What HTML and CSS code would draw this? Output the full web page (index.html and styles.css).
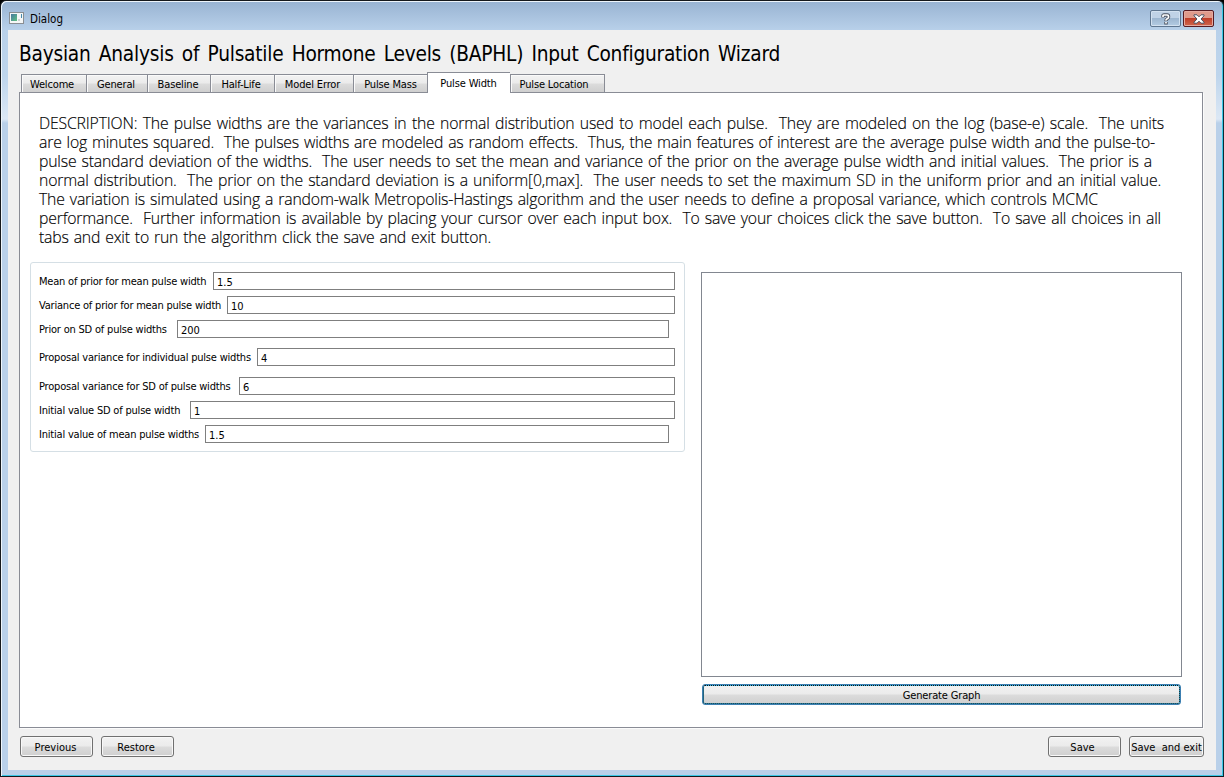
FILE: index.html
```html
<!DOCTYPE html>
<html lang="en">
<head>
<meta charset="utf-8">
<title>Dialog</title>
<link rel="stylesheet" href="styles.css">
</head>
<body>
<div class="window">
  <header class="titlebar">
    <svg class="app-icon" width="15" height="12" viewBox="0 0 15 12">
      <defs><linearGradient id="g" x2="1" y2="1"><stop offset="0" stop-color="#4778a0"/><stop offset="1" stop-color="#5fc182"/></linearGradient></defs>
      <rect x=".5" y=".5" width="14" height="11" fill="#f5f7f7" stroke="#8a8e92"/>
      <rect x="2" y="2" width="6" height="7" fill="url(#g)"/>
      <rect x="9" y="7" width="2" height="2" fill="#ccd3d3"/>
      <rect x="12" y="2" width="1" height="4" fill="#488cae"/>
    </svg>
    <span class="caption">Dialog</span>
    <button class="win-btn help" aria-label="Help"><svg width="10" height="12" viewBox="0 0 10 12"><path d="M2 4.6V3Q2 2 3.2 2h3Q7.5 2 7.5 3.2v1Q7.5 5.2 6.2 5.8T5 8.2M5 9v2.4" fill="none" stroke="#4b5260" stroke-width="3.4"/><path d="M2 4V3Q2 2 3.2 2h3Q7.5 2 7.5 3.2v1Q7.5 5.2 6.2 5.8T5 7.6M5 9v1.6" fill="none" stroke="#fff" stroke-width="1.7"/></svg></button>
    <button class="win-btn close" aria-label="Close"><svg width="12" height="10" viewBox="0 0 12 10"><path d="M1 .8h3l2 2 2-2h3v1L8 5l3 3.2v1H8l-2-2-2 2H1v-1L4 5 1 1.8z" fill="#fff" stroke="#4a5060"/></svg></button>
  </header>
  <main class="client">
    <h1><span class="fit">Baysian Analysis of Pulsatile Hormone Levels (BAPHL) Input Configuration Wizard</span></h1>
    <nav class="tabs">
      <span class="tab t1">Welcome</span><span class="tab t2">General</span><span class="tab t3">Baseline</span><span class="tab t4">Half-Life</span><span class="tab t5">Model Error</span><span class="tab t6">Pulse Mass</span><span class="tab t7 selected">Pulse Width</span><span class="tab t8">Pulse Location</span>
    </nav>
    <section class="panel">
      <div class="description">
        <div class="line l1">DESCRIPTION: The pulse widths are the variances in the normal distribution used to model each pulse.&nbsp; They are modeled on the log (base-e) scale.&nbsp; The units</div>
        <div class="line l2">are log minutes squared.&nbsp; The pulses widths are modeled as random effects.&nbsp; Thus, the main features of interest are the average pulse width and the pulse-to-</div>
        <div class="line l3">pulse standard deviation of the widths.&nbsp; The user needs to set the mean and variance of the prior on the average pulse width and initial values.&nbsp; The prior is a</div>
        <div class="line l4">normal distribution.&nbsp; The prior on the standard deviation is a uniform[0,max].&nbsp; The user needs to set the maximum SD in the uniform prior and an initial value.</div>
        <div class="line l5">The variation is simulated using a random-walk Metropolis-Hastings algorithm and the user needs to define a proposal variance, which controls MCMC</div>
        <div class="line l6">performance.&nbsp; Further information is available by placing your cursor over each input box.&nbsp; To save your choices click the save button.&nbsp; To save all choices in all</div>
        <div class="line l7">tabs and exit to run the algorithm click the save and exit button.</div>
      </div>
      <div class="content">
        <div class="group">
          <div class="row"><label class="w1">Mean of prior for mean pulse width</label><div class="field">1.5</div></div>
          <div class="row"><label class="w2">Variance of prior for mean pulse width</label><div class="field">10</div></div>
          <div class="row short"><label class="w3">Prior on SD of pulse widths</label><div class="field">200</div></div>
          <div class="row spaced-a"><label class="w4">Proposal variance for individual pulse widths</label><div class="field">4</div></div>
          <div class="row spaced-b"><label class="w5">Proposal variance for SD of pulse widths</label><div class="field">6</div></div>
          <div class="row"><label class="w6">Initial value SD of pulse width</label><div class="field">1</div></div>
          <div class="row short"><label class="w7">Initial value of mean pulse widths</label><div class="field">1.5</div></div>
        </div>
        <div class="graph-col">
          <div class="graph"></div>
          <button class="generate">Generate Graph</button>
        </div>
      </div>
    </section>
    <footer class="actions">
      <button class="btn">Previous</button>
      <button class="btn restore">Restore</button>
      <button class="btn save">Save</button>
      <button class="btn exit">Save&nbsp; and exit</button>
    </footer>
  </main>
</div>
</body>
</html>
```
FILE: styles.css
```css
* { box-sizing: border-box; }
body { margin: 0; background: #000; font: 11px/14px "DejaVu Sans Condensed", "DejaVu Sans", sans-serif; font-stretch: condensed; color: #000; overflow: hidden; }
button { font: inherit; color: inherit; padding: 0; }
.window { width: 1224px; height: 777px; border: 1px solid #15181c; border-right-color: #092c35; border-radius: 6px 6px 0 0; padding: 0 6px 6px; background: linear-gradient(#98b3d2 0, #b9d1ea 30px, #bed5ec 75px, #dce8f5 118px, #b9d0e9 122px); box-shadow: inset 1px 1px #eef5fb, inset -1px -1px #3bc8e6; }
.titlebar { height: 29px; display: flex; padding: 9px 3px 0 2px; }
.app-icon { margin-top: 2px; }
.caption { margin: 2px auto 0 6px; font-size: 11.5px; }
.win-btn { height: 17px; width: 31px; border: 1px solid #5f7690; border-radius: 2px; box-shadow: inset 0 0 0 1px #d3e1f0; background: linear-gradient(#c0d2e6 45%, #9db6d0 50%, #b4cce3); display: flex; align-items: center; justify-content: center; }
.win-btn.close { margin-left: 2px; border-color: #551b22; box-shadow: inset 0 0 0 1px #e5aaa0; background: linear-gradient(#df9a8b 45%, #bf3e29 50%, #d0674d); }
.client { height: 740px; margin: 0 1px; background: #f0f0f0; padding: 0 12px 0 11px; display: flex; flex-direction: column; }
h1 { margin: 0; height: 43px; padding-top: 11px; font-size: 20.7px; line-height: 27px; font-weight: 400; white-space: nowrap; }
.fit { display: block; width: 761px; text-align-last: justify; letter-spacing: -.24px; }
.tabs { height: 20px; display: flex; align-items: flex-end; padding-left: 2px; position: relative; z-index: 1; white-space: nowrap; }
.tab { height: 18px; margin-bottom: 1px; border: 1px solid #898c95; border-right-width: 0; border-bottom: 0; text-align: center; padding-top: 2px; line-height: 15px; background: linear-gradient(#f2f2f2, #ebebeb 48%, #dcdcdc 52%, #cfcfcf); box-shadow: inset 1px 1px #fafafa; letter-spacing: -.15px; }
.t1 { width: 65px; padding-right: 4px; }
.t2 { width: 61px; padding-right: 2px; }
.t3 { width: 63px; padding-right: 2px; }
.t4 { width: 64px; padding-right: 3px; }
.t5 { width: 79px; padding-right: 3px; }
.t6 { width: 74px; }
.tab.selected { width: 83px; height: 21px; margin-bottom: 0; margin-top: -1px; background: #fff; box-shadow: none; padding-top: 4px; padding-right: 1px; line-height: 14px; }
.t8 { width: 95px; border-right-width: 1px; padding-right: 7px; }
.panel { margin-top: -1px; height: 636px; border: 1px solid #898c95; background: #fff; width: 1184px; padding: 21px 20px 0 10px; box-shadow: 1px 1px #fbfbfb; }
.description { margin-left: 9px; font: 300 15.8px/19px "Open Sans", "Noto Sans", sans-serif; font-stretch: normal; height: 148px; white-space: nowrap; -webkit-text-stroke: .15px #000; }
.line { text-align-last: justify; letter-spacing: -.18px; }
.l1 { width: 1125px; } .l2 { width: 1116px; } .l3 { width: 1113px; } .l4 { width: 1122px; } .l5 { width: 1059px; } .l6 { width: 1122px; } .l7 { width: 452px; }
.content { display: flex; align-items: flex-start; gap: 16px; }
.group { width: 655px; height: 190px; border: 1px solid #d5dfe5; border-radius: 3px; padding: 9px 9px 0 8px; display: flex; flex-direction: column; gap: 6px; }
.row { display: flex; height: 18px; }
.row.short { margin-right: 6px; }
.spaced-a { margin-top: 4px; }
.spaced-b { margin-top: 5px; }
.row label { line-height: 19px; white-space: nowrap; letter-spacing: -.2px; }
.w1 { width: 174px; } .w2 { width: 188px; } .w3 { width: 138px; } .w4 { width: 218px; } .w5 { width: 200px; } .w6 { width: 151px; } .w7 { width: 166px; }
.field { flex: 1; border: 1px solid #7f7f7f; padding: 1px 3px; line-height: 17px; }
.graph-col { width: 481px; padding-top: 10px; }
.graph { height: 405px; border: 1px solid #828790; }
.generate { display: block; margin: 7px 0 0 1px; width: 479px; height: 21px; padding-top: 2px; border: 1px solid #3c7fb1; border-radius: 3px; background: linear-gradient(#f2f2f2, #ebebeb 48%, #dcdcdc 52%, #cfcfcf); box-shadow: inset 0 0 0 1px #36b8e8; outline: 1px dotted #111; outline-offset: -2px; letter-spacing: -.15px; }
.actions { display: flex; gap: 8px; margin-top: 8px; padding-left: 1px; }
.btn { width: 73px; height: 21px; padding: 2px 2px 0 0; border: 1px solid #707070; border-radius: 3px; background: linear-gradient(#f2f2f2, #ebebeb 48%, #dcdcdc 52%, #cfcfcf); box-shadow: inset 0 0 0 1px #f8f8f8; white-space: nowrap; }
.btn.restore { padding-right: 3px; }
.btn.save { margin-left: auto; padding-right: 4px; }
.btn.exit { width: 75px; padding-right: 0; }
```
